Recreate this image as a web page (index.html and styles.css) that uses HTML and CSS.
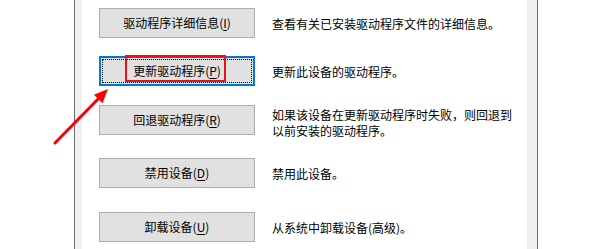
FILE: index.html
```html
<!DOCTYPE html>
<html lang="zh-CN">
<head>
  <meta charset="UTF-8">
  <title>驱动程序</title>
  <link rel="stylesheet" href="styles.css">
</head>
<body>

  <div class="window">
    <div class="outside"></div>
    <div class="edge-left"></div>
    <div class="panel">
      <div class="actions">
        <button class="btn">驱动程序详细信息(<u>I</u>)</button>
        <div class="desc">查看有关已安装驱动程序文件的详细信息。</div>

        <button class="btn focus"><span class="dots">更新驱动程序(<u>P</u>)</span></button>
        <div class="desc">更新此设备的驱动程序。</div>

        <button class="btn">回退驱动程序(<u>R</u>)</button>
        <div class="desc">如果该设备在更新驱动程序时失败，则回退到<br>以前安装的驱动程序。</div>

        <button class="btn">禁用设备(<u>D</u>)</button>
        <div class="desc">禁用此设备。</div>

        <button class="btn">卸载设备(<u>U</u>)</button>
        <div class="desc">从系统中卸载设备(高级)。</div>
      </div>
    </div>
    <div class="edge-right"></div>
  </div>

  <!-- 标注 -->
  <div class="mark"></div>
  <svg class="arrow" width="600" height="249" viewBox="0 0 600 249">
    <line x1="55" y1="143" x2="100" y2="97" stroke="#f00" stroke-width="3" stroke-linecap="round"/>
    <polygon points="108,89 102.5,103.2 93.9,94.8" fill="#f00"/>
  </svg>

</body>
</html>
```

FILE: styles.css
```css
body {
  margin: 0;
  background: #fff;
  color: #000;
  font-family: "Microsoft YaHei", "Noto Sans CJK SC", sans-serif;
  font-size: 12px;
  width: 600px;
  height: 249px;
  overflow: hidden;
  position: relative;
}

.window {
  display: flex;
  height: 249px;
}

.outside {
  width: 74px;
}

.edge-left {
  width: 7px;
  border-left: 1px solid #6d6d6d;
  background: #f0f0f0;
}

.panel {
  width: 445px;
  padding: 8px 0 0 17px;
  box-sizing: border-box;
}

.edge-right {
  width: 10px;
  border-right: 1px solid #6d6d6d;
  background: #f0f0f0;
}

.actions {
  display: grid;
  grid-template-columns: 156px auto;
  grid-template-rows: 48px 49px 53px 54px auto;
  column-gap: 17px;
  align-items: start;
}

.btn {
  height: 30px;
  box-sizing: border-box;
  border: 1px solid #adadad;
  background: #e1e1e1;
  font-family: inherit;
  font-size: 12px;
  color: #000;
  padding: 0;
  line-height: 16px;
}

.btn u {
  text-decoration-thickness: 1px;
  text-underline-offset: 2px;
}

.btn.focus {
  border: 2px solid #0078d7;
  padding: 1px;
}

.dots {
  display: flex;
  align-items: center;
  justify-content: center;
  height: 100%;
  box-sizing: border-box;
  border: 1px dotted #000;
}

.desc {
  line-height: 16px;
  padding-top: 8px;
}

.actions .desc:nth-of-type(3) {
  padding-top: 2px;
}

.mark {
  position: absolute;
  left: 125px;
  top: 55px;
  width: 101px;
  height: 27px;
  box-sizing: border-box;
  border: 2px solid #e8101a;
}

.arrow {
  position: absolute;
  left: 0;
  top: 0;
}
```
